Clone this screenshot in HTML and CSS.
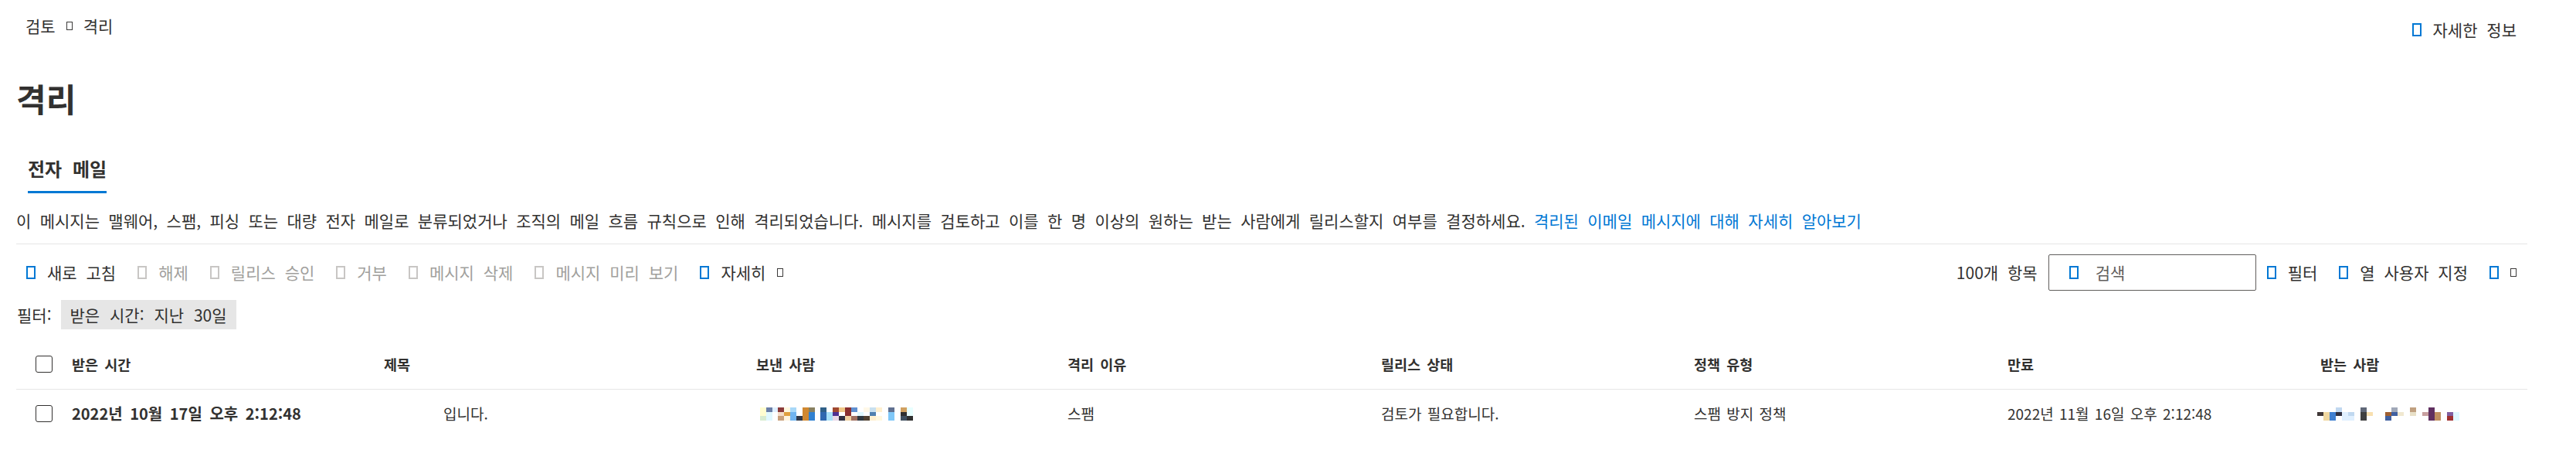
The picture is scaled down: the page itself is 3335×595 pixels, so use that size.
FILE: index.html
```html
<!DOCTYPE html>
<html lang="ko">
<head>
    <meta charset="UTF-8">
    <title>격리</title>
    <link rel="stylesheet" href="styles.css">
</head>
<body>
    <div class="page">
        <div class="top">
            <nav class="crumbs">
                <span>검토</span>
                <i class="tofu tofu-small"></i>
                <span>격리</span>
            </nav>
            <a class="help"><i class="tofu tofu-blue"></i>자세한 정보</a>
        </div>

        <h1 class="title">격리</h1>

        <div class="tabs">
            <span class="tab">전자 메일</span>
        </div>

        <p class="intro">이 메시지는 맬웨어, 스팸, 피싱 또는 대량 전자 메일로 분류되었거나 조직의 메일 흐름 규칙으로 인해 격리되었습니다. 메시지를 검토하고 이를 한 명 이상의 원하는 받는 사람에게 릴리스할지 여부를 결정하세요. <a class="link">격리된 이메일 메시지에 대해 자세히 알아보기</a></p>

        <div class="toolbar">
            <div class="actions">
                <span class="cmd"><i class="tofu tofu-blue"></i>새로 고침</span>
                <span class="cmd off"><i class="tofu tofu-gray"></i>해제</span>
                <span class="cmd off"><i class="tofu tofu-gray"></i>릴리스 승인</span>
                <span class="cmd off"><i class="tofu tofu-gray"></i>거부</span>
                <span class="cmd off"><i class="tofu tofu-gray"></i>메시지 삭제</span>
                <span class="cmd off"><i class="tofu tofu-gray"></i>메시지 미리 보기</span>
                <span class="cmd"><i class="tofu tofu-blue"></i>자세히<i class="tofu tofu-small"></i></span>
            </div>
            <div class="tools">
                <span class="count">100개 항목</span>
                <div class="search"><i class="tofu tofu-blue"></i><span>검색</span></div>
                <span class="cmd"><i class="tofu tofu-blue"></i>필터</span>
                <span class="cmd"><i class="tofu tofu-blue"></i>열 사용자 지정</span>
                <span class="cmd"><i class="tofu tofu-blue"></i><i class="tofu tofu-small"></i></span>
            </div>
        </div>

        <div class="filters">
            <span>필터:</span>
            <span class="pill">받은 시간: 지난 30일</span>
        </div>

        <div class="grid">
            <div class="row head">
                <span class="check"></span>
                <span>받은 시간</span>
                <span>제목</span>
                <span>보낸 사람</span>
                <span>격리 이유</span>
                <span>릴리스 상태</span>
                <span>정책 유형</span>
                <span>만료</span>
                <span>받는 사람</span>
            </div>
            <div class="row item">
                <span class="check"></span>
                <span class="strong">2022년 10월 17일 오후 2:12:48</span>
                <span class="subject">입니다.</span>
                <span><i class="mosaic sender"></i></span>
                <span>스팸</span>
                <span>검토가 필요합니다.</span>
                <span>스팸 방지 정책</span>
                <span class="date">2022년 11월 16일 오후 2:12:48</span>
                <span><i class="mosaic receiver"></i></span>
            </div>
        </div>
    </div>
</body>
</html>
```

FILE: styles.css
```css
body {
    margin: 0;
    font-family: "Noto Sans CJK KR", "Noto Sans", sans-serif;
    color: #323130;
    background: #fff;
}

.page {
    padding: 22px 63px 0 21px;
    font-size: 21px;
    word-spacing: 6px;
}

/* missing-glyph boxes, as the icon font renders without its font */
.tofu {
    display: inline-block;
    box-sizing: border-box;
    flex-shrink: 0;
}

.tofu-blue {
    width: 12px;
    height: 17px;
    border: 2px solid #0078d4;
}

.tofu-gray {
    width: 12px;
    height: 17px;
    border: 2px solid #c8c6c4;
}

.tofu-small {
    width: 8px;
    height: 11px;
    border: 1.5px solid #3b3a39;
}

.top {
    display: flex;
    justify-content: space-between;
    align-items: flex-start;
    height: 22px;
    line-height: 22px;
}

.crumbs {
    display: flex;
    align-items: center;
    gap: 14px;
    padding-left: 12px;
}

.help {
    display: flex;
    align-items: center;
    gap: 15px;
    margin-top: 5px;
    margin-right: 14px;
}

.title {
    margin: 58px 0 0;
    font-size: 42px;
    line-height: 50px;
    font-weight: 700;
}

.tabs {
    margin-top: 52px;
    padding-left: 15px;
    height: 44px;
}

.tab {
    display: inline-block;
    font-size: 24px;
    font-weight: 700;
    line-height: 24px;
    word-spacing: 7px;
    padding-bottom: 17px;
    border-bottom: 3px solid #0078d4;
}

.intro {
    margin: 25px 0 0;
    line-height: 24px;
    word-spacing: 5.5px;
    white-space: nowrap;
}

.link {
    color: #0078d4;
}

.toolbar {
    margin-top: 18px;
    border-top: 1px solid #e6e6e6;
    height: 72px;
    display: flex;
    justify-content: space-between;
    align-items: center;
    padding: 0 14px 0 13px;
    line-height: 24px;
}

.actions,
.tools {
    display: flex;
    align-items: center;
    gap: 28px;
}

.tools {
    gap: 14px;
}

.cmd {
    display: flex;
    align-items: center;
    gap: 15px;
}

.cmd.off {
    color: #a19f9d;
}

.tools .cmd + .cmd {
    margin-left: 14px;
}

.search {
    display: flex;
    align-items: center;
    gap: 22px;
    width: 269px;
    height: 47px;
    box-sizing: border-box;
    padding-left: 26px;
    border: 1px solid #605e5c;
    border-radius: 2px;
    color: #605e5c;
}

.filters {
    display: flex;
    align-items: center;
    gap: 12px;
    height: 38px;
    padding-left: 1px;
}

.pill {
    background: #e6e6e6;
    padding: 0 12px;
    line-height: 38px;
    word-spacing: 7px;
}

.grid {
    margin-top: 13px;
}

.row {
    display: grid;
    grid-template-columns: 72px 404px 482px 403px 406px 405px 406px 405px 1fr;
    align-items: center;
    line-height: 22px;
}

.row.head {
    height: 64px;
    font-size: 18.5px;
    font-weight: 700;
    word-spacing: 3px;
    border-bottom: 1px solid #e6e6e6;
}

.row.item {
    height: 62px;
    font-size: 19px;
    word-spacing: 2px;
}

.check {
    width: 22px;
    height: 22px;
    box-sizing: border-box;
    margin-left: 25px;
    border: 1px solid #323130;
    border-radius: 3px;
}

.strong {
    font-size: 20px;
    font-weight: 700;
    word-spacing: 4px;
}

.date {
    font-family: "Liberation Sans Narrow", "Noto Sans CJK KR", sans-serif;
}

.subject {
    padding-left: 77px;
}

/* pixelated, redacted addresses */
.mosaic {
    display: block;
    height: 17px;
    background-repeat: no-repeat;
    background-size: 100% 6px, 100% 5px, 100% 6px;
    background-position: 0 0, 0 6px, 0 11px;
}

.sender {
    width: 198px;
    margin-left: 5px;
    background-image:
        linear-gradient(to right, #fffdd0 0 8px, #6b7fa8 8px 16px, #e0f0ff 16px 23px, #8b3a3a 23px 31px, #fff8e0 31px 39px, #a8d8f8 39px 47px, #fff 47px 55px, #d08830 55px 63px, #888060 63px 71px, #fff 71px 78px, #306088 78px 86px, #fff 86px 94px, #a04830 94px 102px, #f0c888 102px 110px, #8b3030 110px 118px, #6090d0 118px 126px, #fff 126px 134px, #fff8e8 134px 142px, #c8e0f0 142px 150px, #fff0d0 150px 158px, #fff 158px 166px, #607090 166px 174px, #fff 174px 182px, #d0a060 182px 190px, #e8ffff 190px 198px),
        linear-gradient(to right, #fffdd0 0 8px, #e0f8ff 8px 16px, #fff 16px 23px, #f4dcc8 23px 31px, #e0a040 31px 39px, #70b4f0 39px 47px, #fff 47px 55px, #d08830 55px 63px, #3080d0 63px 71px, #fff 71px 78px, #3068b0 78px 86px, #a8e0f8 86px 94px, #503090 94px 102px, #fff 102px 110px, #8b3030 110px 118px, #fff 118px 126px, #e0f8ff 126px 134px, #fff 134px 142px, #5080b0 142px 150px, #fff 150px 166px, #80c8f8 166px 174px, #fff 174px 182px, #303030 182px 190px, #e8ffff 190px 198px),
        linear-gradient(to right, #d8ecd0 0 8px, #e0f8ff 8px 16px, #fff 16px 23px, #c8a07c 23px 31px, #fff4e0 31px 39px, #70b4f0 39px 47px, #303848 47px 55px, #d08830 55px 63px, #3080d0 63px 71px, #fff 71px 78px, #3068b0 78px 86px, #a8e0f8 86px 94px, #e8d8e8 94px 102px, #303040 102px 110px, #f0d0a0 110px 118px, #a07060 118px 126px, #303840 126px 134px, #504030 134px 142px, #fff0d0 142px 150px, #fff8e0 150px 158px, #fff 158px 166px, #80c8f8 166px 174px, #fff 174px 182px, #405060 182px 190px, #303030 190px 198px);
}

.receiver {
    width: 207px;
    margin-left: -4px;
    background-image:
        linear-gradient(to right, #fff 0 24px, #c0d8f0 24px 32px, #fff 32px 56px, #606878 56px 64px, #fff 64px 96px, #a0a8b8 96px 104px, #fff 104px 120px, #c0a080 120px 128px, #fff 128px 144px, #603060 144px 152px, #fff 152px 207px),
        linear-gradient(to right, #403838 0 8px, #f0d8a0 8px 16px, #4080d0 16px 24px, #303040 24px 32px, #e0f0ff 32px 40px, #c0d8f0 40px 48px, #fff 48px 56px, #404040 56px 64px, #f8e0b0 64px 72px, #fff 72px 88px, #a06030 88px 96px, #4060a0 96px 104px, #f0e8d0 104px 112px, #fff 112px 120px, #e8e0c8 120px 128px, #fff 128px 136px, #c8a0a0 136px 144px, #603060 144px 152px, #c09060 152px 160px, #fff 160px 168px, #8060a0 168px 176px, #e0f8ff 176px 184px, #fff 184px 207px),
        linear-gradient(to right, #fff 0 8px, #f0d8a0 8px 16px, #4080d0 16px 24px, #fff 24px 32px, #e0f0ff 32px 48px, #fff 48px 56px, #404040 56px 64px, #fff 64px 88px, #4060a0 88px 96px, #fff 96px 144px, #603060 144px 152px, #c09060 152px 160px, #fff 160px 168px, #a03030 168px 176px, #e0f8ff 176px 184px, #fff 184px 207px);
}
```
